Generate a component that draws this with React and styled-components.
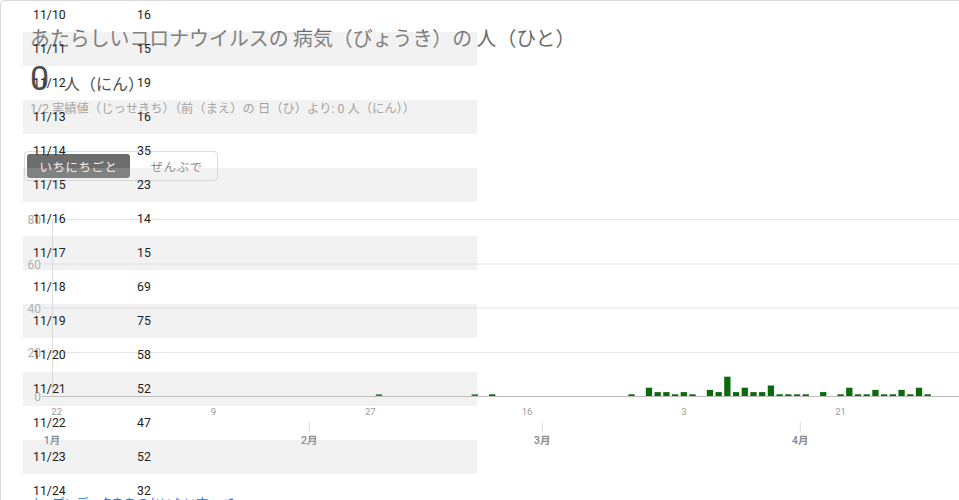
import React from "react";
import styled, { createGlobalStyle } from "styled-components";

const Global = createGlobalStyle`
  html, body { margin: 0; padding: 0; background: #fff; overflow: hidden; }
  body { font-family: Roboto, "Noto Sans CJK JP", sans-serif; }
`;

const Page = styled.div`
  position: relative;
  width: 959px;
  height: 500px;
  overflow: hidden;
`;

const Card = styled.section`
  width: 1000px;
  border: 1px solid #d9d9d9;
  border-radius: 4px;
  background: #fff;
  box-sizing: border-box;
`;

const Header = styled.header`
  padding: 22px 0 0 29px;
  display: flex;
  flex-direction: column;
  align-items: flex-start;
`;

const Title = styled.h3`
  margin: 0;
  font-size: 19.9px;
  line-height: 30px;
  font-weight: 400;
  color: #6b6b6b;
  font-family: "Noto Sans CJK JP", sans-serif;
`;

const ValueRow = styled.div`
  margin-top: 5px;
  display: flex;
  align-items: baseline;
  color: #4d4d4d;
  height: 40px;
`;

const BigValue = styled.span`
  font-size: 34px;
  line-height: 40px;
  font-family: Roboto, sans-serif;
`;

const Unit = styled.span`
  margin-left: 15px;
  font-size: 16px;
  font-family: "Noto Sans CJK JP", sans-serif;
`;

const SubText = styled.div`
  margin-top: 2px;
  font-size: 12.3px;
  line-height: 18px;
  color: #9a9a9a;
  font-family: Roboto, "Noto Sans CJK JP", sans-serif;
`;

const Toggle = styled.div`
  margin: 33px 0 0 23px;
  width: 194px;
  height: 30px;
  box-sizing: border-box;
  border: 1px solid #dcdcdc;
  border-radius: 4px;
  padding: 2px;
  display: flex;
  align-items: stretch;
`;

const ToggleBtn = styled.button`
  border: none;
  border-radius: 3px;
  padding: 0 0 0 ${(p) => p.$pad || 0}px;
  width: ${(p) => p.$w}px;
  background: ${(p) => (p.$active ? "#6d6d6d" : "transparent")};
  color: ${(p) => (p.$active ? "#f2f2f2" : "#8a8a8a")};
  font-size: 12.5px;
  letter-spacing: 0.5px;
  font-family: "Noto Sans CJK JP", sans-serif;
  cursor: pointer;
`;

const ChartSvg = styled.svg`
  display: block;
  margin-top: 24px;
`;

const Footer = styled.footer`
  padding: 38px 0 0 28px;
`;

const Link = styled.a`
  display: inline-flex;
  align-items: center;
  gap: 3px;
  font-size: 12px;
  line-height: 18px;
  color: #2a6fd6;
  text-decoration: none;
  font-family: "Noto Sans CJK JP", sans-serif;
`;

const Table = styled.div`
  position: absolute;
  top: -2px;
  left: 23px;
  width: 454px;
  z-index: 2;
  pointer-events: none;
`;

const Row = styled.div`
  display: grid;
  grid-template-columns: 104px 1fr;
  height: 34px;
  align-items: center;
  padding-left: 10px;
  box-sizing: border-box;
  background: ${(p) => (p.$shade ? "rgba(200,200,200,0.23)" : "transparent")};
  font-size: 12.3px;
  color: #222;
  font-family: Roboto, sans-serif;
`;

const tableData = [
  ["11/10", 16], ["11/11", 15], ["11/12", 19], ["11/13", 16], ["11/14", 35],
  ["11/15", 23], ["11/16", 14], ["11/17", 15], ["11/18", 69], ["11/19", 75],
  ["11/20", 58], ["11/21", 52], ["11/22", 47], ["11/23", 52], ["11/24", 32],
];

const bars = {
  37: 1, 48: 1, 50: 1, 66: 1, 68: 4, 69: 2, 70: 2, 71: 1, 72: 2, 73: 1,
  75: 3, 76: 2, 77: 9, 78: 2, 79: 4, 80: 2, 81: 2, 82: 5, 83: 1, 84: 1,
  85: 1, 86: 1, 88: 2, 90: 1, 91: 4, 92: 1, 93: 1, 94: 3, 95: 1, 96: 1,
  97: 3, 98: 1, 99: 4, 100: 1,
};

const X0 = 56.7;
const PITCH = 8.71;
const BASE = 396.5;
const UNIT = 2.2;
const OY = 205;

function Chart() {
  const grid = [
    [80, 219.5], [60, 264], [40, 308], [20, 352.5],
  ];
  const days = [["22", 0], ["9", 18], ["27", 36], ["16", 54], ["3", 72], ["21", 90]];
  const months = [["1月", 52], ["2月", 309.3], ["3月", 542.3], ["4月", 800.3]];
  return (
    <ChartSvg width="998" height="250" viewBox={`1 ${OY} 998 250`}>
      {grid.map(([v, y]) => (
        <g key={v}>
          <line x1="42" x2="999" y1={y} y2={y} stroke="#e4e4e4" strokeWidth="1" />
          <text x="41" y={y + 4.5} textAnchor="end" fontSize="12" fill="#ababab" fontFamily="Roboto, sans-serif">{v}</text>
        </g>
      ))}
      <line x1="52.5" x2="52.5" y1="219" y2={BASE} stroke="#e0e0e0" />
      {Object.entries(bars).map(([d, v]) => {
        const cx = X0 + Number(d) * PITCH;
        const h = v * UNIT;
        return <rect key={d} x={cx - 3.15} y={BASE - h} width="6.3" height={h} fill="#0b6a0b" />;
      })}
      <line x1="42" x2="999" y1={BASE} y2={BASE} stroke="#bdbdbd" />
      <text x="41" y={BASE + 4.5} textAnchor="end" fontSize="12" fill="#ababab" fontFamily="Roboto, sans-serif">0</text>
      {days.map(([t, d]) => (
        <text key={t} x={X0 + d * PITCH} y="414.5" textAnchor="middle" fontSize="9.5" fill="#9a9a9a" fontFamily="Roboto, sans-serif">{t}</text>
      ))}
      {months.map(([t, x]) => (
        <g key={t}>
          <line x1={x} x2={x} y1="422" y2="432" stroke="#dcdcdc" />
          <text x={x} y="444" textAnchor="middle" fontSize="10.5" fontWeight="600" fill="#8c8c8c" fontFamily="Roboto, 'Noto Sans CJK JP', sans-serif">{t}</text>
        </g>
      ))}
    </ChartSvg>
  );
}

function ExternalIcon() {
  return (
    <svg width="11" height="11" viewBox="0 0 24 24" fill="none" stroke="#2a6fd6" strokeWidth="2.5">
      <path d="M14 3h7v7" />
      <path d="M10 14L21 3" />
      <path d="M19 14v5a2 2 0 0 1-2 2H5a2 2 0 0 1-2-2V7a2 2 0 0 1 2-2h5" />
    </svg>
  );
}

export default function App() {
  return (
    <Page>
      <Global />
      <Card>
        <Header>
          <Title>あたらしいコロナウイルスの 病気（びょうき）の 人（ひと）</Title>
          <ValueRow>
            <BigValue>0</BigValue>
            <Unit>人（にん）</Unit>
          </ValueRow>
          <SubText>1/2 実績値（じっせきち）（前（まえ）の 日（ひ）より: 0 人（にん））</SubText>
        </Header>
        <Toggle>
          <ToggleBtn $active $w={104}>いちにちごと</ToggleBtn>
          <ToggleBtn $w={86} $pad={8}>ぜんぶで</ToggleBtn>
        </Toggle>
        <Chart />
        <Footer>
          <Link href="#">
            オープンデータをあつかいたい方へ
            <ExternalIcon />
          </Link>
        </Footer>
      </Card>
      <Table>
        {tableData.map(([d, n], i) => (
          <Row key={d} $shade={i % 2 === 1}>
            <span>{d}</span>
            <span>{n}</span>
          </Row>
        ))}
      </Table>
    </Page>
  );
}
